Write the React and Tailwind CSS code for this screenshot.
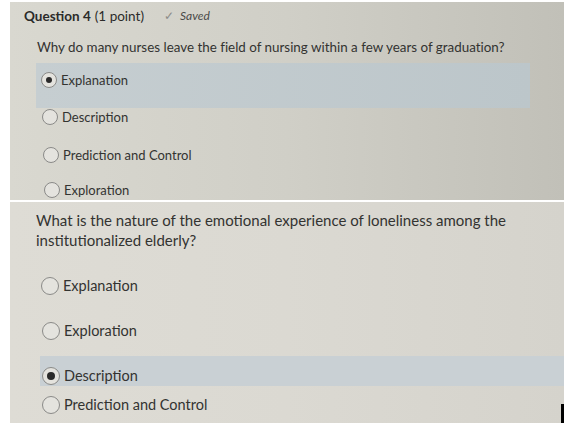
import React from "react";

function Radio({ size = 16, selected = false }) {
  return (
    <span
      className="flex shrink-0 items-center justify-center rounded-full border border-[#8a8a88] bg-[#e4e3de]"
      style={{ width: size, height: size }}
    >
      {selected && <span className="block rounded-full bg-[#2a2a2a]" style={{ width: size * 0.42, height: size * 0.42 }} />}
    </span>
  );
}

function Option({ label, size, selected, gap = "gap-[4px]", text = "text-[13px]", className = "" }) {
  return (
    <div className={`flex items-center ${gap} ${className}`}>
      <Radio size={size} selected={selected} />
      <span className={`${text} leading-[18px] text-[#333331]`}>{label}</span>
    </div>
  );
}

export default function App() {
  return (
    <div
      className="relative h-[438px] w-[564px] overflow-hidden bg-white"
      style={{ fontFamily: "Lato, 'Open Sans', sans-serif" }}
    >
      <div className="flex flex-col pt-[2px]">
        {/* top photo */}
        <div className="ml-[10px] flex h-[198px] flex-col bg-gradient-to-r from-[#d9d8d0] via-[#d0cfc7] to-[#c1c0b8]">
          <div className="ml-[14px] mt-[5px] flex h-[18px] items-center text-[13.5px] text-[#2b2b2a]">
            <span className="font-bold">Question 4</span>
            <span className="ml-[4px]">(1 point)</span>
            <span className="ml-[20px] text-[12px] text-[#8c8c88]">✓</span>
            <span className="ml-[6px] text-[12px] italic text-[#4a4a48]">Saved</span>
          </div>
          <div className="ml-[27px] mt-[13px] h-[18px] text-[13.4px] leading-[18px] text-[#333331] [font-variant-ligatures:none]">
            Why do many nurses leave the field of nursing within a few years of graduation?
          </div>
          <div className="ml-[26px] mt-[7px] h-[45px] w-[494px] bg-gradient-to-r from-[#c6ced1] to-[#bcc6ca] pl-[5px] pt-[8px]">
            <Option label="Explanation" size={16} selected />
          </div>
          <Option label="Description" size={16} className="ml-[32px] h-[18px]" />
          <Option label="Prediction and Control" size={16} className="ml-[33px] mt-[20px] h-[18px]" />
          <Option label="Exploration" size={16} className="ml-[34px] mt-[17px] h-[18px]" />
        </div>

        {/* second photo */}
        <div className="relative ml-[10px] mt-[2px] flex h-[221px] flex-col bg-gradient-to-r from-[#dedcd5] via-[#dbd9d2] to-[#d5d3cc]">
          <div className="ml-[26px] mt-[8px] text-[15px] leading-[20px] text-[#333331]">
            <div>What is the nature of the emotional experience of loneliness among the</div>
            <div>institutionalized elderly?</div>
          </div>
          <Option label="Explanation" size={18} text="text-[14.5px]" className="ml-[31px] mt-[26px] h-[20px]" />
          <Option label="Exploration" size={18} text="text-[14.5px]" className="ml-[32px] mt-[25px] h-[20px]" />
          <div className="ml-[30px] mt-[15px] h-[30px] bg-[#c9d0d4] pl-[2px] pt-[10px]">
            <Option label="Description" size={18} selected text="text-[14.5px]" className="h-[20px]" />
          </div>
          <Option label="Prediction and Control" size={18} text="text-[14.5px]" className="ml-[32px] mt-[9px] h-[20px]" />
          <div className="absolute bottom-0 right-0 h-[19px] w-[3px] bg-black" />
        </div>
      </div>
    </div>
  );
}
